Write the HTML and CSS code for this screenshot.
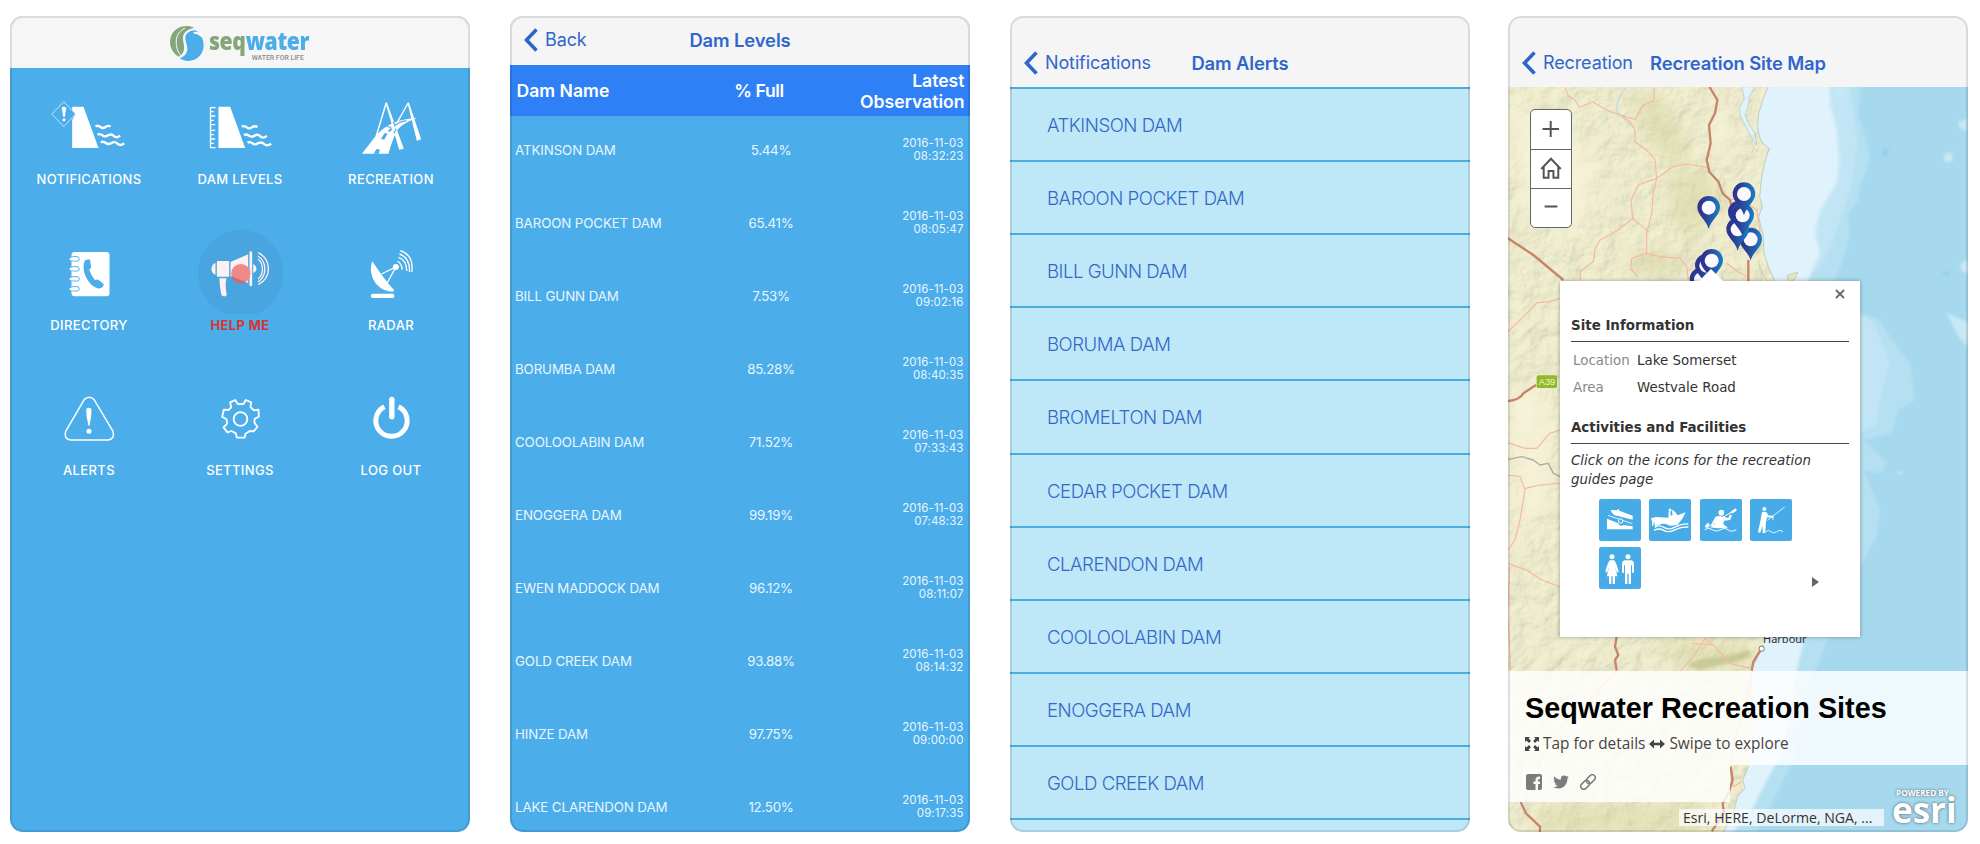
FILE: index.html
```html
<!DOCTYPE html>
<html lang="en">
<head>
<meta charset="utf-8">
<title>Seqwater</title>
<link rel="stylesheet" href="styles.css">
</head>
<body>
<main class="gallery">

<section class="screen home">
  <header class="brand">
    <svg class="brand-mark" viewBox="505 72 112 116">
      <path fill="#85a67c" d="M584 84C560 71 528 80 516 104C505 128 513 158 538 170C546 165 550 160 552 152C556 140 550 128 550 115C550 100 560 88 584 84Z"/>
      <path fill="none" stroke="#f6f6f6" stroke-width="3" d="M556 84C534 96 528 112 530 134C532 150 538 160 544 168"/>
      <path fill="#4badea" d="M587 91C570 91 556 101 557 116C558 130 566 138 562 154C558 168 548 172 540 175C562 189 592 184 606 160C618 136 612 106 587 91Z"/>
      <path fill="none" stroke="#fff" stroke-width="5" stroke-linecap="round" d="M584 98Q598 99 605 108"/>
    </svg>
    <div class="brand-words">
      <div class="brand-name"><span>seq</span>water</div>
      <div class="brand-tag">WATER FOR LIFE</div>
    </div>
  </header>
  <div class="tiles">
    <div class="tile">
      <svg viewBox="40.5 204 453 300">
        <g fill="#fff"><path d="M215 320H249L294 444H215V360L225 342L215 330Z"/>
        <path d="M184 324Q184 320 190 320Q197 320 197 325L193 350H188Z"/><circle cx="190.500" cy="359" r="4.500"/></g>
        <g fill="none" stroke="#fff"><path stroke-width="2" d="M190 305L225 342L190 380L154 342Z"/>
        <path stroke-width="7" d="M285 379q8-4 15 2t15 0t15-1M291 404q8-4 15 2t17 0t17 2t19-1M301 427q8-4 15 2t17 0t18 2t20-1"/></g>
      </svg>
      <span class="label">NOTIFICATIONS</span>
    </div>
    <div class="tile">
      <svg viewBox="493.5 204 453 300">
        <path fill="#fff" d="M654 320H689L734 444H654Z"/>
        <g fill="none" stroke="#fff"><path stroke-width="4" d="M645 323H630V443H645M630 335H640M630 348H644M630 361H640M630 374H644M630 391H644M630 404H640M630 417H644M630 430H640"/>
        <path stroke-width="7" d="M724 380q8-4 15 2t15 0t17-1M730 405q8-4 15 2t17 0t17 2t20-1M741 428q8-4 15 2t17 0t18 2t21-1"/></g>
      </svg>
      <span class="label">DAM LEVELS</span>
    </div>
    <div class="tile">
      <svg viewBox="946.5 204 453 300">
        <g transform="translate(1050 285)">
          <path fill="none" stroke="#fff" stroke-width="4.500" d="M77 124L107 24M134 93L173 24"/>
          <path fill="#fff" d="M105 24L109 22L160 161L146 164ZM171 24L175 22L212 133L199 137Z"/>
          <path fill="#fff" d="M34 176L78 120Q120 72 200 69Q158 84 143 102Q130 120 114 176Z"/>
          <path fill="#4badea" d="M91 131L103 114L111 116L101 134ZM70 176L77 163L88 163L85 176ZM112 108L121 99L126 102L118 111Z"/>
          <path fill="none" stroke="#4badea" stroke-width="3.500" d="M107 92L122 98M128 80L134 92M131 94Q146 80 168 77M130 115L137 101"/>
        </g>
      </svg>
      <span class="label">RECREATION</span>
    </div>

    <div class="tile">
      <svg viewBox="40.5 11 453 300">
        <rect x="213" y="125" width="114" height="133" rx="9" fill="#fff"/>
        <g fill="none" stroke="#4badea" stroke-width="3"><rect x="212" y="139" width="24" height="13" rx="6"/><rect x="212" y="169" width="24" height="13" rx="6"/><rect x="212" y="199" width="24" height="13" rx="6"/><rect x="212" y="229" width="24" height="13" rx="6"/></g>
        <g stroke="#fff" stroke-width="8" stroke-linecap="round"><path d="M211 146H228M211 176H228M211 206H228M211 236H228"/></g>
        <path fill="#4badea" d="M254 150L264 147Q268 147 269 151L272 169Q272 173 266 178Q272 195 283 209Q291 206 294 209L309 220Q311 224 307 229Q301 236 290 234Q267 226 254 195Q244 165 254 150Z"/>
      </svg>
      <span class="label">DIRECTORY</span>
    </div>
    <div class="tile">
      <svg viewBox="493.5 11 453 300">
        <ellipse cx="721" cy="189" rx="128" ry="131" fill="#48a5df"/>
        <g fill="#fdf1f1"><path d="M645 158C629 162 629 190 645 193Z"/><rect x="649" y="152" width="37" height="47" rx="3"/>
        <path d="M657 204H678Q674 218 676 235Q678 250 679 254Q672 262 663 255Q660 240 658 225ZM690 155L743 132V218L690 199Z"/>
        <rect x="747" y="123" width="8" height="105" rx="4"/><path d="M758 161Q768 166 768 175Q768 184 758 188Z"/></g>
        <g fill="none" stroke="#fdf1f1" stroke-width="4"><path d="M773 147C790 160 790 191 773 206M772 137C800 154 800 198 772 215M773 127C814 148 814 202 773 223"/></g>
        <circle cx="721" cy="190" r="29" fill="#f08a8a"/>
        <path fill="#c66d7a" d="M692 197L736 215A29 29 0 0 1 692 197Z"/>
      </svg>
      <span class="label help">HELP ME</span>
    </div>
    <div class="tile">
      <svg viewBox="946.5 11 453 300">
        <path fill="#fff" d="M1115 153C1101 194 1127 244 1178 244L1181 239C1154 211 1137 184 1115 153Z"/>
        <rect x="1111" y="250" width="71" height="13" rx="6" fill="#fff"/>
        <circle cx="1186" cy="170" r="9" fill="#fff"/>
        <g fill="none" stroke="#fff" stroke-width="4"><path d="M1143 191L1186 170L1160 218M1191 152Q1204 160 1205 178M1194 141Q1218 149 1219 182M1197 131Q1229 142 1227 185M1199 121Q1240 133 1234 185"/></g>
      </svg>
      <span class="label">RADAR</span>
    </div>

    <div class="tile">
      <svg viewBox="40.5 448 453 300">
        <path fill="none" stroke="#fff" stroke-width="4.500" d="M251 570Q266 556 281 570L337 664Q345 687 323 691H210Q188 687 196 664Z"/>
        <path fill="#fff" d="M257 600Q257 594 265 594Q273 594 273 600Q273 622 267 648H264Q257 622 257 600Z"/><circle cx="265.500" cy="665" r="7.500" fill="#fff"/>
      </svg>
      <span class="label">ALERTS</span>
    </div>
    <div class="tile">
      <svg viewBox="493.5 448 453 300">
        <g fill="none" stroke="#fff" stroke-width="5.500" stroke-linejoin="round"><circle cx="720" cy="628" r="20.500"/>
        <path d="M704 571L712 583H729L736 571L752 578L750 592L760 602L774 600L775 621L762 628V639L771 652L759 665L748 664L735 672L732 684H709L706 671L693 664L681 668L669 653L680 642L678 629L665 621L670 600L684 601L692 593L689 578Z"/></g>
      </svg>
      <span class="label">SETTINGS</span>
    </div>
    <div class="tile">
      <svg viewBox="946.5 448 453 300">
        <g fill="none" stroke="#fff"><path stroke-width="15" d="M1152 591A47 47 0 1 0 1194 591"/><path stroke-width="16" stroke-linecap="round" d="M1174 569V621"/></g>
      </svg>
      <span class="label">LOG OUT</span>
    </div>
  </div>
</section>

<section class="screen levels">
  <header class="nav nav-short">
    <svg class="chevron" viewBox="0 0 14 24"><path d="M12.500 1.500L2.500 12L12.500 22.500"/></svg>
    <span class="back">Back</span><h2 class="title">Dam Levels</h2>
  </header>
  <div class="head"><b>Dam Name</b><b class="pct">% Full</b><b class="obs">Latest<br>Observation</b></div>
  <div class="rows">
    <div class="row"><span>ATKINSON DAM</span><span class="pct">5.44%</span><time>2016-11-03<br>08:32:23</time></div>
    <div class="row"><span>BAROON POCKET DAM</span><span class="pct">65.41%</span><time>2016-11-03<br>08:05:47</time></div>
    <div class="row"><span>BILL GUNN DAM</span><span class="pct">7.53%</span><time>2016-11-03<br>09:02:16</time></div>
    <div class="row"><span>BORUMBA DAM</span><span class="pct">85.28%</span><time>2016-11-03<br>08:40:35</time></div>
    <div class="row"><span>COOLOOLABIN DAM</span><span class="pct">71.52%</span><time>2016-11-03<br>07:33:43</time></div>
    <div class="row"><span>ENOGGERA DAM</span><span class="pct">99.19%</span><time>2016-11-03<br>07:48:32</time></div>
    <div class="row"><span>EWEN MADDOCK DAM</span><span class="pct">96.12%</span><time>2016-11-03<br>08:11:07</time></div>
    <div class="row"><span>GOLD CREEK DAM</span><span class="pct">93.88%</span><time>2016-11-03<br>08:14:32</time></div>
    <div class="row"><span>HINZE DAM</span><span class="pct">97.75%</span><time>2016-11-03<br>09:00:00</time></div>
    <div class="row"><span>LAKE CLARENDON DAM</span><span class="pct">12.50%</span><time>2016-11-03<br>09:17:35</time></div>
  </div>
</section>

<section class="screen alerts">
  <header class="nav">
    <svg class="chevron" viewBox="0 0 14 24"><path d="M12.500 1.500L2.500 12L12.500 22.500"/></svg>
    <span class="back">Notifications</span><h2 class="title">Dam Alerts</h2>
  </header>
  <ul class="alert-list">
    <li>ATKINSON DAM</li><li>BAROON POCKET DAM</li><li>BILL GUNN DAM</li><li>BORUMA DAM</li><li>BROMELTON DAM</li>
    <li>CEDAR POCKET DAM</li><li>CLARENDON DAM</li><li>COOLOOLABIN DAM</li><li>ENOGGERA DAM</li><li>GOLD CREEK DAM</li><li></li>
  </ul>
</section>

<section class="screen sites">
  <header class="nav">
    <svg class="chevron" viewBox="0 0 14 24"><path d="M12.500 1.500L2.500 12L12.500 22.500"/></svg>
    <span class="back">Recreation</span><h2 class="title">Recreation Site Map</h2>
  </header>
  <div class="map">
    <svg class="canvas" viewBox="24 261 1380 2235">
      <defs>
        <filter id="relief" x="0" y="0" width="1" height="1">
          <feTurbulence type="fractalNoise" baseFrequency="0.018" numOctaves="5" seed="8" result="n"/>
          <feDiffuseLighting in="n" surfaceScale="9" lighting-color="#f4f2d6" result="l"><feDistantLight azimuth="225" elevation="62"/></feDiffuseLighting>
          <feComposite in="l" in2="SourceGraphic" operator="in"/>
        </filter>
        <filter id="soft" x="-20%" y="-20%" width="140%" height="140%"><feGaussianBlur stdDeviation="22"/></filter>
        <filter id="soft2"><feGaussianBlur stdDeviation="5"/></filter>
        <linearGradient id="pin"><stop offset=".2" stop-color="#2c3590"/><stop offset="1" stop-color="#1a7fc4"/></linearGradient>
        <path id="land" d="M24 260H805L788 300L776 340L773 380L778 410L790 432L808 446L796 480L785 530L779 590L787 620L776 650L790 710L792 760L805 800L825 845L850 1000V1700L790 1935L764 1990L756 2040L765 2180L745 2300L728 2340L735 2365L712 2390L700 2440L670 2496H24Z"/>
        <clipPath id="landClip"><use href="#land"/></clipPath>
        <g id="marker"><path d="M0 64C-7 36-34 24-34 -1A34 34 0 0 1 34 -1C34 24 7 36 0 64Z" fill="url(#pin)"/><circle r="21" fill="#fbf9ff"/></g>
      </defs>
      <rect x="24" y="260" width="1380" height="2236" fill="#a6d8ee"/>
      <g filter="url(#soft2)">
        <path fill="#b5e0f2" d="M700 240H1085L1075 340L1095 410L1110 480L1080 560L1075 600L1045 640L1050 700L1030 780L1000 850L1080 940L1140 960L1170 1010L1230 1090L1245 1200L1195 1230L1175 1300L1090 1320L1160 1390L1140 1420L1090 1410L1140 1530L1130 1610L1080 1700L970 1950L910 2100L890 2260L820 2400L770 2496H600Z"/>
        <path fill="#c2e5f5" d="M1000 240H1045L1060 340L1070 420L1060 520L1040 600L1000 720L960 800L900 850V600ZM1080 940L1120 970L1170 1090L1140 1190L1130 1270L1080 1300Z"/>
        <path fill="#e0f2fb" d="M700 240H988L992 320L1008 380L1018 480L1010 550L960 630L945 700L960 760L920 850L880 1000L850 1900L910 1930L890 2010L870 2120L850 2250L790 2360L760 2420L700 2496H600Z"/>
        <path fill="#c9e8f6" d="M1340 940L1404 965V1040L1375 1010ZM1330 465L1355 455L1358 485L1335 485ZM1375 365L1400 358V390L1380 388ZM1380 790L1404 780V820L1385 815ZM1185 1415H1210L1200 1425ZM1000 268H1050L1025 285Z"/>
        <path fill="#93ccea" d="M1150 448L1167 446L1155 472L1147 468ZM1325 812L1350 820L1340 832Z"/>
      </g>
      <use href="#land" filter="url(#relief)"/>
      <g clip-path="url(#landClip)">
        <use href="#land" fill="#f1efcd" opacity=".5"/>
        <g filter="url(#soft)"><path fill="#c9cb8d" opacity=".35" d="M380 290L470 280L560 400L560 500L460 450ZM500 520L620 510L680 620L570 700L510 650ZM400 760L500 740L560 830H400ZM430 1920L760 1930L740 2000L560 2010ZM100 2420L600 2410L650 2496H120ZM560 600L600 730L560 800Z"/>
        <path fill="#f7f3da" opacity=".8" d="M24 300L200 400L300 500L240 700L60 620ZM24 1150L150 1200V1500L60 1600ZM640 300L700 420L640 480Z"/></g>
        <g opacity=".6" filter="url(#soft2)"><path fill="#b6bb80" d="M570 1990L610 1975L680 1968L750 1950L755 1970L690 1990L640 2000L600 2012L568 2000Z"/></g>
      </g>
      <g fill="none" stroke-linejoin="round">
        <path stroke="#a9bfae" stroke-width="2" d="M805 260L788 300L776 340L773 380L778 410L790 432L808 446L796 480L785 530L779 590L787 620L776 650L790 710L792 760L805 800L825 845M790 1935L764 1990M745 2300L728 2340L735 2365L712 2390L700 2440L670 2496"/>
        <path fill="#e0f2fb" stroke="#a9c7b9" stroke-width="2" d="M725 260H765L748 290L745 318L735 345L748 375L765 400L770 435L758 420L745 395L722 350L718 325L733 296Z"/>
        <path stroke="#b6c6a6" stroke-width="2" d="M765 400L752 430L762 440L755 460M775 780Q780 820 805 845"/>
        <path fill="#e3e6bd" stroke="#b6c6a6" stroke-width="2" d="M863 842L862 826L893 816L885 838L872 845"/>
        <path stroke="#add9e8" stroke-width="3" d="M380 264Q350 285 350 335L395 380"/>
        <g stroke="#f5b9a0" stroke-width="3.500"><path d="M195 262L205 288L225 300L238 322L278 306L328 334L362 345L405 358L430 315L462 302L463 262M362 345L390 365L405 390V425L445 455L465 480L470 535L460 580L455 640L440 700L440 760L480 770L540 775L560 800L565 842M470 535L520 500L560 492L622 502M470 535L415 555L393 600L398 655L445 695M398 655L355 690L300 720L285 745L280 785L242 812L240 842M440 760L395 775L392 805L412 830M690 600L720 595L770 630L780 690L770 740M680 790L720 820L745 830M24 995L80 940L110 908L150 905L180 895M24 1328L75 1345L110 1345L150 1300L180 1290M24 1425L60 1430L75 1470L60 1560L45 1620L24 1650M75 1465L120 1455L180 1450M24 1690L80 1710L125 1740L180 1760M28 1700L24 1850L32 2010M345 2015L270 2100L185 2180L120 2280L110 2350L75 2405M540 2015L580 1970L615 1915L650 1945L690 1990L750 2005M580 1930L640 1935M690 2300L700 2360L725 2345"/></g>
        <g stroke="#c88468" stroke-width="7"><path d="M628 260L652 300L645 340L627 375L632 430L620 480L628 515L655 545L668 580L690 600L700 640M745 780V845M24 715L100 765L190 840M24 1203Q60 1200 70 1180L108 1155M350 1910L345 1940L355 1965L345 1980L350 2012M785 1945L760 1985L755 2012M692 2300L698 2340L685 2380L668 2410L672 2440L635 2494M62 2406L78 2440L120 2480L120 2496"/></g>
        <path stroke="#efbaa6" stroke-width="4" d="M757 2014L740 2110L700 2230L692 2295"/>
        <path stroke="#9b9b8e" stroke-width="4" opacity=".8" d="M24 1378L65 1370L100 1380L120 1395L145 1390L160 1420L180 1430"/>
      </g>
      <rect x="110" y="1126" width="61" height="38" rx="5" fill="#8fb92b"/>
      <text class="road" x="116" y="1155">A39</text>
      <circle cx="785" cy="1946" r="8" fill="#fff" stroke="#777" stroke-width="3"/>
      <text class="town" x="789" y="1928">Harbour</text>
      <use href="#marker" x="626" y="623"/><use href="#marker" x="718" y="637"/><use href="#marker" x="752" y="718"/><use href="#marker" x="713" y="688"/><use href="#marker" x="728" y="646"/><use href="#marker" x="732" y="582"/>
      <use href="#marker" x="603" y="838"/><use href="#marker" x="619" y="797"/><use href="#marker" x="635" y="782"/>
    </svg>

    <div class="zoom">
      <svg viewBox="0 0 39 39"><path d="M11 19H27.500M19.200 11V27" stroke-width="2"/></svg>
      <svg viewBox="0 0 39 39"><path d="M9.500 19.500L19.500 9L29.500 19.500M12 17V28.500H17V21.500H22V28.500H27V17" stroke-width="2"/></svg>
      <svg viewBox="0 0 39 39"><path d="M13 18H26" stroke-width="2.200"/></svg>
    </div>

    <div class="popup">
      <svg class="close" viewBox="0 0 10 10"><path d="M1 1L9 9M9 1L1 9"/></svg>
      <h3>Site Information</h3>
      <dl><dt>Location</dt><dd>Lake Somerset</dd><dt>Area</dt><dd>Westvale Road</dd></dl>
      <h3>Activities and Facilities</h3>
      <p>Click on the icons for the recreation<br>guides page</p>
      <div class="facilities">
        <svg viewBox="298 688 126 126"><path fill="#fff" d="M333 721L352 722L357 717L359 723L399 738V750L345 737Q334 729 333 721ZM322 747L356 761A9 9 0 0 0 371 766L399 770V779H322Z"/><path fill="none" stroke="#fff" stroke-width="2.500" d="M325 737L398 762"/><circle cx="363" cy="754" r="6.500" fill="#46abe6" stroke="#fff" stroke-width="3"/></svg>
        <svg viewBox="450 688 126 126"><path fill="#fff" d="M456 746L470 742L508 744L509 728Q509 724 514 724L515 738L521 737L518 719Q530 727 536 737L560 728Q551 750 536 765Q524 768 512 768Q496 758 480 766L468 770L465 754L463 768H459V755Z"/><circle cx="513" cy="721" r="4.500" fill="#fff"/><path fill="none" stroke="#fff" stroke-width="4" d="M467 773Q481 764 495 773T524 774T550 764T568 763M465 782Q480 774 494 782T524 782T550 773T568 772"/></svg>
        <svg viewBox="600 688 126 126"><circle cx="664" cy="729" r="8.500" fill="#fff"/><path fill="none" stroke="#fff" stroke-width="3" d="M620 774L704 721M614 780Q626 771 637 780T662 780T684 780T709 780"/><path fill="none" stroke="#fff" stroke-width="8" stroke-linecap="round" d="M697 727L706 721M619 770L624 764"/><path fill="#fff" d="M646 742Q655 736 669 741L685 745L690 734L696 738L690 751L672 753L670 764L684 774L650 776L630 773L644 764L646 755L638 771L633 766Z"/></svg>
        <svg viewBox="750 688 126 126"><circle cx="793" cy="718" r="6" fill="#fff"/><path fill="#fff" d="M786 726L799 727L805 737L821 739L820 744L801 743L798 756L796 790H788L787 768L781 789L774 788L781 755Z"/><path fill="none" stroke="#fff" stroke-width="2.500" d="M802 752L854 712M798 786Q806 778 813 786T830 786T849 786M819 742V752"/></svg>
        <svg viewBox="298 1480 126 126"><g fill="#fff"><circle cx="337" cy="1509" r="7.500"/><circle cx="385" cy="1509" r="7.500"/><path d="M330 1520H344Q351 1530 357 1554L352 1557L346 1540L353 1568H346V1591H339V1568H335V1591H328V1568H321L329 1540L322 1557L317 1554Q323 1530 330 1520ZM375 1520H395Q403 1522 403 1532V1557H397V1535H394V1591H387V1560H383V1591H376V1535H373V1557H367V1532Q367 1522 375 1520Z"/></g></svg>
      </div>
      <i class="next"></i>
    </div>
    <i class="pointer"></i>

    <div class="caption">
      <h1>Seqwater Recreation Sites</h1>
      <div class="hint">
        <svg class="expand" viewBox="0 0 14 14"><path d="M0 0H5L3.600 1.400L6 3.800L4 6L1.500 3.500L0 5ZM14 0V5L12.600 3.600L10 6L8.200 4L10.500 1.500L9 0ZM0 14V9L1.500 10.500L4 8L6 10.200L3.500 12.600L5 14ZM14 14H9L10.500 12.600L8.200 10.200L10 8L12.600 10.500L14 9Z"/></svg>
        <span>Tap for details</span>
        <svg class="swipe" viewBox="0 0 16 10"><path d="M0 5L5 .5V3.700H11V.5L16 5L11 9.500V6.300H5V9.500Z"/></svg>
        <span>Swipe to explore</span>
      </div>
    </div>
    <div class="social">
      <svg viewBox="0 0 16 16"><path fill-rule="evenodd" d="M2 0H14Q16 0 16 2V14Q16 16 14 16H12V10H14V7.500H12V6Q12 4.800 14 5V2.500Q9.500 2 9.500 6V7.500H7.500V10H9.500V16H2Q0 16 0 14V2Q0 0 2 0Z"/></svg>
      <svg viewBox="0 0 16 16"><path d="M16 3.200L14.400 4.800Q14.400 10 10.500 13Q5.500 16 0 13.100Q3 13.200 4.800 11.800Q2.500 11.500 1.800 9.500H3.200Q.8 8.500.7 6.200L2.100 6.600Q0 4.500 1.200 2.200Q4 5.500 7.900 5.600Q7.500 2 10.600 1.400Q12.300 1.300 13.400 2.400L15.400 1.700L14.200 3.500Z"/></svg>
      <svg class="link" viewBox="0 0 16 16"><g transform="rotate(-45 8 8)"><rect x="-1" y="5" width="10" height="6" rx="3"/><rect x="7" y="5" width="10" height="6" rx="3"/></g></svg>
    </div>
    <div class="credit">Esri, HERE, DeLorme, NGA, ...</div>
    <div class="esri"><small>POWERED BY</small><strong>esri</strong></div>
  </div>
</section>

</main>
</body>
</html>
```
FILE: styles.css
```css
* { box-sizing: border-box; }
body { margin: 0; background: #fff; font-family: Inter, "Liberation Sans", sans-serif; }
svg { display: block; }
.gallery { width: 1980px; height: 844px; padding: 16px 12px 12px 10px; display: flex; gap: 40px; overflow: hidden; }
.screen { position: relative; flex: none; width: 460px; height: 816px; border-radius: 13px; overflow: hidden; }
.screen::after { content: ""; position: absolute; inset: 0; border: 2px solid rgba(0, 0, 0, .11); border-radius: 13px; pointer-events: none; }
.sites { margin-left: -2px; }

/* Home */
.home { background: #4badea; }
.brand { height: 52px; background: #f6f6f6; display: flex; padding: 8px 0 0 158px; }
.brand-mark { flex: none; width: 37.300px; height: 38.700px; }
.brand-words { width: 101px; margin-left: 3.500px; }
.brand-name { font: 800 25.500px/33px "Open Sans", sans-serif; color: #4badea; letter-spacing: -.4px; white-space: nowrap; transform: scaleX(.83); transform-origin: left; }
.brand-name span { color: #85a67c; }
.brand-tag { font: 500 6.900px/8px Roboto, sans-serif; color: #8b8b8b; text-align: right; margin: -3px 6px 0 0; white-space: nowrap; }
.tiles { display: grid; grid-template-columns: repeat(3, 151px); grid-auto-rows: 145.700px; justify-content: center; }
.tile { display: flex; flex-direction: column; align-items: center; }
.tile svg { width: 151px; height: 100px; flex: none; }
.label { font-size: 13px; font-weight: 500; line-height: 23px; letter-spacing: .38px; color: #fff; white-space: nowrap; }
.help { color: #d8342e; font-weight: 700; }

/* Navigation bars */
.nav { position: relative; height: 71px; padding: 22px 0 0 14px; background: #f5f5f5; color: #2f66cc; display: flex; align-items: center; }
.nav .title, .nav .back { line-height: 24px; }
.nav-short { height: 49px; padding: 0 0 1px 14px; }
.chevron { width: 14px; height: 24px; fill: none; stroke: currentColor; stroke-width: 3.600; }
.back { margin-left: 7px; font-size: 18px; letter-spacing: -.12px; white-space: nowrap; }
.title { position: absolute; left: 0; right: 0; margin: 0; text-align: center; font-size: 18.400px; font-weight: 600; letter-spacing: -.1px; white-space: nowrap; }
.nav-short .title { top: 12px; }

/* Dam levels */
.levels { background: #4badea; color: #fff; }
.head, .row { display: grid; grid-template-columns: 206px 100px 1fr; align-items: center; }
.head { grid-template-columns: 192.500px 100px 1fr; height: 51.300px; padding: 1px 5.500px 0 6.500px; background: #2f80f7; font-size: 17.600px; line-height: 21.500px; }
.head b { font-weight: 600; white-space: nowrap; }
.head .pct { letter-spacing: -.4px; }
.pct { text-align: center; }
.obs { text-align: right; }
.row { height: 73px; padding: 0 6.500px 6px 5px; font-size: 13.300px; letter-spacing: -.1px; color: #eaf6fe; white-space: nowrap; }
.row .pct { letter-spacing: -.25px; }
.row time { text-align: right; font-size: 11.500px; line-height: 13.300px; letter-spacing: .1px; }

/* Dam alerts */
.alerts { background: #bee7f8; }
.alert-list { margin: 0; padding: 0; list-style: none; }
.alert-list li { height: 73.120px; border-top: 2px solid #4bacdf; padding-left: 37px; line-height: 73px; font-size: 18.600px; letter-spacing: -.48px; font-weight: 300; color: #3468c6; white-space: nowrap; }

/* Recreation map */
.map { position: relative; height: 745px; overflow: hidden; }
.canvas { position: absolute; inset: 0; width: 460px; height: 745px; }
.road { font: 28px "Liberation Sans", sans-serif; fill: #f3f8c9; }
.town { font: 33px "Noto Sans", sans-serif; fill: #333; }
.zoom { position: absolute; left: 22px; top: 22px; width: 42px; height: 119px; background: #fff; border: 1px solid #666; border-radius: 5px; }
.zoom svg { width: 40px; height: 39px; fill: none; stroke: #555; }
.zoom svg + svg { border-top: 1px solid #666; }
.popup { position: absolute; left: 52px; top: 194px; width: 300px; height: 356px; padding: 33px 11px 0; background: #fff; box-shadow: 0 0 4px rgba(0, 0, 0, .35); font-family: "DejaVu Sans", sans-serif; color: #333; }
.pointer { position: absolute; left: 191px; top: 182px; border: 12px solid transparent; border-top: 0; border-bottom-color: #fff; }
.close { position: absolute; right: 15px; top: 8px; width: 10px; height: 10px; stroke: #666; stroke-width: 1.800; }
.popup h3 { margin: 0; height: 28px; border-bottom: 1px solid #444; font-size: 13.400px; line-height: 23px; white-space: nowrap; }
.popup dl { display: grid; grid-template-columns: 64px 1fr; grid-auto-rows: 26.700px; margin: 6px 0 0 2px; height: 68px; font-size: 13.400px; line-height: 26.700px; white-space: nowrap; }
.popup dt { color: #888; }
.popup dd { margin: 0; }
.popup p { margin: 7px 0 0; font-size: 13.400px; line-height: 19px; font-style: italic; white-space: nowrap; }
.facilities { display: grid; grid-template-columns: repeat(4, 42px); gap: 6px 8.300px; margin: 10px 0 0 28px; }
.facilities svg { width: 42px; height: 42px; background: #46abe6; border-radius: 2px; }
.next { position: absolute; left: 252px; top: 296px; border: 5.500px solid transparent; border-left: 7px solid #666; border-right: 0; }
.caption { position: absolute; left: 0; right: 0; top: 584px; height: 94px; padding: 18px 0 0 17px; background: rgba(255, 255, 255, .82); }
.caption h1 { margin: 0; font: 700 28.800px/38px "Liberation Sans", sans-serif; color: #000; white-space: nowrap; }
.hint { display: flex; align-items: center; height: 34px; font: 15.400px/34px "Open Sans", sans-serif; color: #444; white-space: nowrap; }
.hint svg { fill: #444; }
.expand { width: 14px; height: 14px; margin-right: 4px; }
.swipe { width: 16px; height: 10px; margin: 0 4px; }
.social { position: absolute; left: 0; top: 678px; width: 222px; height: 37px; padding: 0 0 3px 18px; background: rgba(255, 255, 255, .82); display: flex; align-items: center; gap: 11px; }
.social svg { width: 16px; height: 16px; fill: #7b7b7b; }
.social .link { fill: none; stroke: #7b7b7b; stroke-width: 1.500; }
.credit { position: absolute; left: 171px; top: 722px; width: 205px; height: 17px; padding-left: 4px; background: rgba(255, 255, 255, .7); font: 14.100px/17px "Open Sans", sans-serif; color: #333; white-space: nowrap; }
.esri { position: absolute; left: 384px; top: 699px; width: 72px; color: #fff; font-family: "Open Sans", sans-serif; text-shadow: 0 0 3px rgba(0, 0, 0, .6); }
.esri small { display: block; padding-left: 4px; font: 700 8.200px/14px "Open Sans", sans-serif; white-space: nowrap; }
.esri strong { display: block; font-size: 35px; line-height: 20px; font-weight: 700; white-space: nowrap; }
```
